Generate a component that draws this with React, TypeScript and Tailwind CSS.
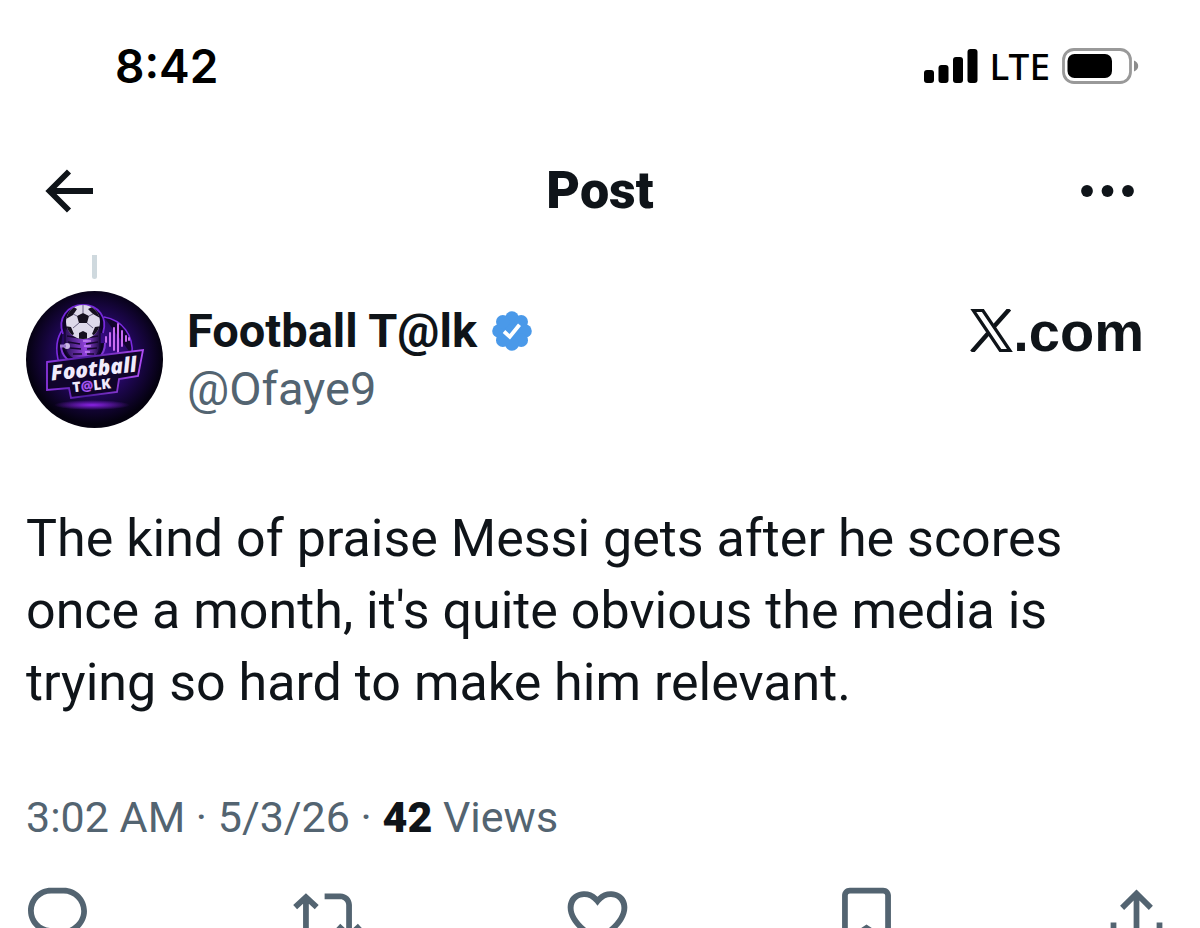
import React from 'react';

interface IconProps {
  path: string;
}

interface Action {
  label: string;
  path: string;
}

const actions: Action[] = [
  {
    label: 'Reply',
    path: 'M1.751 10c0-4.42 3.584-8 8.005-8h4.366c4.49 0 8.129 3.64 8.129 8.13 0 2.96-1.607 5.68-4.196 7.11l-8.054 4.46v-3.69h-.067c-4.49.1-8.183-3.51-8.183-8.01zm8.005-6c-3.317 0-6.005 2.69-6.005 6 0 3.37 2.77 6.08 6.138 6.01l.351-.01h1.761v2.3l5.087-2.81c1.951-1.08 3.163-3.13 3.163-5.36 0-3.39-2.744-6.13-6.129-6.13H9.756z',
  },
  {
    label: 'Repost',
    path: 'M4.5 3.88l4.432 4.14-1.364 1.46L5.5 7.55V16c0 1.1.896 2 2 2H13v2H7.5c-2.209 0-4-1.79-4-4V7.55L1.432 9.48.068 8.02 4.5 3.88zM16.5 6H11V4h5.500c2.209 0 4 1.790 4 4v8.450l2.068-1.930 1.364 1.460-4.432 4.140-4.432-4.140 1.364-1.460 2.068 1.930V8c0-1.100-.896-2-2-2z',
  },
  {
    label: 'Like',
    path: 'M16.697 5.2c-1.222-.06-2.679.51-3.89 2.01l-.805 1.04-.806-1.04C9.984 5.71 8.526 5.14 7.304 5.2c-1.643.07-2.749.88-3.31 2.21-.552 1.32-.433 2.98.679 4.82 1.174 1.97 3.457 4.27 7.329 6.61 3.87-2.34 6.152-4.64 7.326-6.61 1.111-1.84 1.23-3.5.677-4.82-.561-1.33-1.666-2.14-3.308-2.21zm4.387 7.99c-1.451 2.48-4.201 5.12-8.579 7.67l-.503.3-.504-.3c-4.379-2.55-7.129-5.19-8.582-7.67-1.46-2.5-1.61-4.86-.814-6.77.887-2.09 2.947-3.11 5.001-3.21 1.751-.09 3.468.46 4.898 1.91 1.429-1.45 3.146-2 4.896-1.91 2.054.1 4.114 1.12 5.001 3.21.796 1.91.646 4.27-.814 6.77z',
  },
  {
    label: 'Bookmark',
    path: 'M3.5 4.7C3.5 3.2 4.7 2 6.2 2h11.6c1.5 0 2.7 1.2 2.7 2.7v18.24l-8.5-5.71-8.5 5.71V4.7zM6.200 4c-.4 0-.7.3-.7.7v14.4l6.5-4.33 6.5 4.33V4.7c0-.4-.3-.7-.7-.7H6.2z',
  },
  {
    label: 'Share',
    path: 'M12 2.59l5.7 5.7-1.41 1.42L13 6.41V17h-2V6.41l-3.3 3.3-1.41-1.42L12 2.59zM21 14.1v4.4c0 1.38-1.12 2.5-2.5 2.5h-13C4.11 21 3 19.88 3 18.5v-4.4h2v4.4c0 .28.22.5.5.5h13c.28 0 .5-.22.5-.5v-4.4h2z',
  },
];

const ActionIcon: React.FC<IconProps> = ({ path }) => (
  <svg viewBox="0 0 24 24" className="block w-[69px] h-[69px]" fill="currentColor" aria-hidden="true">
    <path d={path} />
  </svg>
);

const StatusBar: React.FC = () => (
  <div className="flex h-[132px] items-center justify-between pl-[115px] pr-[61px] text-black">
    <span className="font-['Inter',sans-serif] text-[46px] font-semibold leading-[56px]">8:42</span>
    <div className="flex items-center">
      <svg viewBox="0 0 54 34" className="w-[54px] h-[34px]" aria-hidden="true">
        <rect x="0" y="21" width="10" height="13" rx="3" />
        <rect x="14.500" y="16" width="10" height="18" rx="3" />
        <rect x="29" y="8" width="10" height="26" rx="3" />
        <rect x="43.500" y="0" width="10" height="34" rx="3" />
      </svg>
      <span className="ml-3 font-['Noto_Sans',sans-serif] text-[37px] font-medium leading-[48px]">LTE</span>
      <svg viewBox="0 0 77 36" className="ml-3 w-[77px] h-[36px]" aria-hidden="true">
        <rect x="1.500" y="1.500" width="67" height="33" rx="10.500" fill="none" stroke="#999999" strokeWidth="2.800" />
        <rect x="5.500" y="6" width="44.500" height="24" rx="7" />
        <path d="M72 12.500c2.700 1 4.200 3 4.200 5.500s-1.500 4.500-4.200 5.500z" fill="#8c8c8c" />
      </svg>
    </div>
  </div>
);

const Header: React.FC = () => (
  <header className="grid h-[118px] grid-cols-3 items-center pl-[45px] pr-[66px]">
    <button type="button" aria-label="Back" className="justify-self-start">
      <svg viewBox="0 0 48 44" className="block w-[48px] h-[44px]" fill="none" stroke="currentColor" strokeWidth="5.800" aria-hidden="true">
        <path d="M24 2.500L4.500 22 24 41.500M5 22h43" />
      </svg>
    </button>
    <h1 className="justify-self-center pl-[21px] text-[52px] font-black leading-[60px]">Post</h1>
    <button type="button" aria-label="More" className="justify-self-end">
      <svg viewBox="0 0 53 12" className="block w-[53px] h-[12px]" fill="currentColor" aria-hidden="true">
        <circle cx="6" cy="6" r="5.900" />
        <circle cx="26.500" cy="6" r="5.900" />
        <circle cx="47" cy="6" r="5.900" />
      </svg>
    </button>
  </header>
);

const Avatar: React.FC = () => (
  <svg viewBox="0 0 137 137" className="block w-[137px] h-[137px] shrink-0 rounded-full" role="img" aria-label="Football T@lk">
    <defs>
      <radialGradient id="backdrop" cx="0.5" cy="0.47" r="0.5">
        <stop offset="0" stopColor="#4a0fa6" />
        <stop offset="0.55" stopColor="#22075c" />
        <stop offset="1" stopColor="#04010f" />
      </radialGradient>
      <radialGradient id="floor" cx="0.5" cy="0.5" r="0.5">
        <stop offset="0" stopColor="#8b22e6" />
        <stop offset="1" stopColor="#8b22e6" stopOpacity="0" />
      </radialGradient>
      <linearGradient id="mic" x1="0" x2="1">
        <stop offset="0" stopColor="#2a1158" />
        <stop offset="0.6" stopColor="#9444e0" />
        <stop offset="1" stopColor="#1d0a42" />
      </linearGradient>
      <linearGradient id="edge" x1="0" x2="1">
        <stop offset="0" stopColor="#8c35e0" />
        <stop offset="0.4" stopColor="#4c1a9c" />
        <stop offset="1" stopColor="#b04cf5" />
      </linearGradient>
      <clipPath id="ball">
        <circle cx="57" cy="31" r="17" />
      </clipPath>
    </defs>
    <rect width="137" height="137" fill="url(#backdrop)" />
    <ellipse cx="66" cy="114" rx="38" ry="5" fill="url(#floor)" />

    {/* ring behind the microphone */}
    <path d="M33 72C29 58 31 46 37 38M78 26c18 3 30 18 28 38" fill="#12042f" stroke="#7c2be0" strokeWidth="1.600" />
    <path d="M37 43c-6-16 5-29 20-29s25 12 20 28" fill="#0d0326" stroke="#7428d8" strokeWidth="1.800" />

    {/* microphone */}
    <path d="M35 54c0 11 8 19 21 19s23-8 23-21" fill="#0b0322" stroke="#7f38d4" strokeWidth="2" />
    <path d="M39 38h35v16c0 10-7 16-17 16s-18-6-18-16z" fill="url(#mic)" stroke="#180739" strokeWidth="1.500" />
    <path d="M41 45l13 2M42 51l12 2M44 57l11 1M47 63h9M60 47l12-2M60 53l12-2M61 58l10-1M61 63h7" stroke="#16062f" strokeWidth="1.600" />
    <path d="M57 50h8M58 55h7M59 61h5" stroke="#e0a8ff" strokeWidth="1.200" />
    <circle cx="41" cy="55" r="3" fill="#cbb9e6" />
    <path d="M34 55h6" stroke="#9b78d0" strokeWidth="3" />

    {/* ball */}
    <circle cx="57" cy="31" r="17" fill="#ddd9ea" />
    <g clipPath="url(#ball)" fill="#15101f">
      <path d="M51 25l6-3 6 3-2 7h-8z" />
      <path d="M40 23l6-8 5 3-4 6-7 4zM74 23l-6-8-6 3 5 5 7 4zM39 35l6 1 3 7-6 4zM75 35l-6 1-3 7 6 4zM53 42l4-2 4 2v7h-8z" />
      <path d="M51 25l-4-2M63 25l4-2M53 32l-6 5M61 32l6 5M57 22v-8" fill="none" stroke="#6b6384" strokeWidth="1" />
    </g>

    {/* sound wave */}
    <path d="M80 46v5M84 42v13M88 37v22M92 33v28M96 40v15M100 45v5M103 47v2" stroke="#c86bf2" strokeWidth="2" strokeLinecap="round" />

    {/* name plate */}
    <path d="M21 71l96-12-5 26-19 3-2 13-46 6-2-10-22 2z" fill="#10042b" stroke="url(#edge)" strokeWidth="1.800" />
    <g fontFamily="Open Sans, sans-serif" fontWeight="800" transform="rotate(-6 68 82)">
      <text x="25" y="85" fontSize="21" fontStyle="italic" fill="#f1eafb">Football</text>
      <text x="45" y="99" fontSize="14" fill="#f1eafb">
        T<tspan fill="#a453ee">@</tspan>LK
      </text>
    </g>
  </svg>
);

const VerifiedBadge: React.FC = () => (
  <svg viewBox="0 0 40 40" className="w-10 h-10" role="img" aria-label="Verified account">
    <g fill="#4a99e9">
      <circle cx="20" cy="20" r="16" />
      <circle cx="20" cy="7" r="6.800" />
      <circle cx="29.200" cy="10.800" r="6.800" />
      <circle cx="33" cy="20" r="6.800" />
      <circle cx="29.200" cy="29.200" r="6.800" />
      <circle cx="20" cy="33" r="6.800" />
      <circle cx="10.800" cy="29.200" r="6.800" />
      <circle cx="7" cy="20" r="6.800" />
      <circle cx="10.800" cy="10.800" r="6.800" />
    </g>
    <path d="M12 20.500l5.800 5.300 9.700-12" fill="none" stroke="#ffffff" strokeWidth="3.800" />
  </svg>
);

const SiteMark: React.FC = () => (
  <a href="#" className="flex items-end text-[#0f1419]" aria-label="X.com">
    <svg viewBox="0 0 43 43" className="w-[43px] h-[43px] mb-3" fill="none" stroke="currentColor" aria-hidden="true">
      <path d="M3.300 1.500h9.600l27 40h-9.600z" strokeWidth="3.200" />
      <path d="M39.500 0L24 17.500M18 24.500L1.800 43" strokeWidth="4.400" />
    </svg>
    <span className="font-['Liberation_Sans',sans-serif] text-[56px] font-bold leading-[64px]">.com</span>
  </a>
);

const App: React.FC = () => {
  return (
    <main className="h-screen overflow-hidden bg-white font-['Roboto',sans-serif] text-[#0f1419]">
      <StatusBar />
      <Header />

      <article>
        {/* Thread line */}
        <div className="ml-[92px] mt-[5px] h-6 w-[5px] rounded-b-sm bg-[#cfd9de]" />

        {/* Author */}
        <div className="mt-3 flex items-start pl-[26px] pr-[56px]">
          <Avatar />
          <div className="ml-6 mt-[11px] flex-1">
            <div className="flex items-center gap-[15px]">
              <h2 className="text-[47px] font-bold leading-[58px]">Football T@lk</h2>
              <VerifiedBadge />
            </div>
            <p className="text-[47px] leading-[58px] text-[#536471]">@Ofaye9</p>
          </div>
          <div className="mt-[9px]">
            <SiteMark />
          </div>
        </div>

        {/* Post text */}
        <p className="mt-[75px] max-w-[1100px] pl-[26px] text-[52px] leading-[72px]">
          The kind of praise Messi gets after he scores once a month, it's quite obvious the media is trying so hard to
          make him relevant.
        </p>

        <p className="mt-[69px] pl-[26px] text-[43px] leading-[58px] text-[#536471]">
          3:02 AM · 5/3/26 · <span className="font-black text-[#0f1419]">42</span> Views
        </p>

        {/* Actions */}
        <div className="mt-9 flex justify-between pl-[23px] pr-[29px] text-[#536471]">
          {actions.map((action) => (
            <button key={action.label} type="button" aria-label={action.label}>
              <ActionIcon path={action.path} />
            </button>
          ))}
        </div>
      </article>
    </main>
  );
};

export default App;
